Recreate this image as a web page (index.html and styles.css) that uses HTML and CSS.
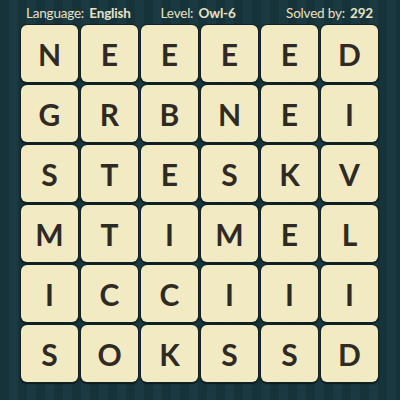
FILE: index.html
```html
<!DOCTYPE html>
<html>
<head>
<meta charset="utf-8">
<link rel="stylesheet" href="styles.css">
</head>
<body>
<div class="page">
  <div class="header">
    <span class="item">Language: <b>English</b></span>
    <span class="item level">Level: <b>Owl-6</b></span>
    <span class="item solved">Solved by: <b>292</b></span>
  </div>
  <div class="grid">
    <div class="tile">N</div><div class="tile">E</div><div class="tile">E</div><div class="tile">E</div><div class="tile">E</div><div class="tile">D</div>
    <div class="tile">G</div><div class="tile">R</div><div class="tile">B</div><div class="tile">N</div><div class="tile">E</div><div class="tile">I</div>
    <div class="tile">S</div><div class="tile">T</div><div class="tile">E</div><div class="tile">S</div><div class="tile">K</div><div class="tile">V</div>
    <div class="tile">M</div><div class="tile">T</div><div class="tile">I</div><div class="tile">M</div><div class="tile">E</div><div class="tile">L</div>
    <div class="tile">I</div><div class="tile">C</div><div class="tile">C</div><div class="tile">I</div><div class="tile">I</div><div class="tile">I</div>
    <div class="tile">S</div><div class="tile">O</div><div class="tile">K</div><div class="tile">S</div><div class="tile">S</div><div class="tile">D</div>
  </div>
</div>
</body>
</html>
```
FILE: styles.css
```css
html, body {
  margin: 0;
  padding: 0;
}
.page {
  width: 400px;
  height: 400px;
  overflow: hidden;
  background-color: #16333a;
  background-image: repeating-linear-gradient(90deg, #16333a 0px, #16333a 9px, #1a3940 9px, #1a3940 18px);
  font-family: "Lato", "Open Sans", sans-serif;
}
.header {
  height: 25px;
  display: flex;
  align-items: center;
  padding: 0 27px 0 26px;
  color: #e6e2c6;
  font-size: 13.5px;
  letter-spacing: -0.2px;
  box-sizing: border-box;
}
.header .level {
  margin-left: 30px;
}
.header .solved {
  margin-left: auto;
}
.header b {
  font-weight: 700;
  margin-left: 2px;
}
.grid {
  display: grid;
  grid-template-columns: repeat(6, 57px);
  grid-auto-rows: 57px;
  gap: 3px;
  padding-left: 21px;
}
.tile {
  background: #f1eac3;
  border-radius: 6px;
  box-shadow: 0 0 0 1px #0f2326, 0 1px 1px 1px rgba(0,0,0,0.5);
  display: flex;
  align-items: center;
  justify-content: center;
  font-size: 30px;
  font-weight: 700;
  color: #2f2a24;
}
```
